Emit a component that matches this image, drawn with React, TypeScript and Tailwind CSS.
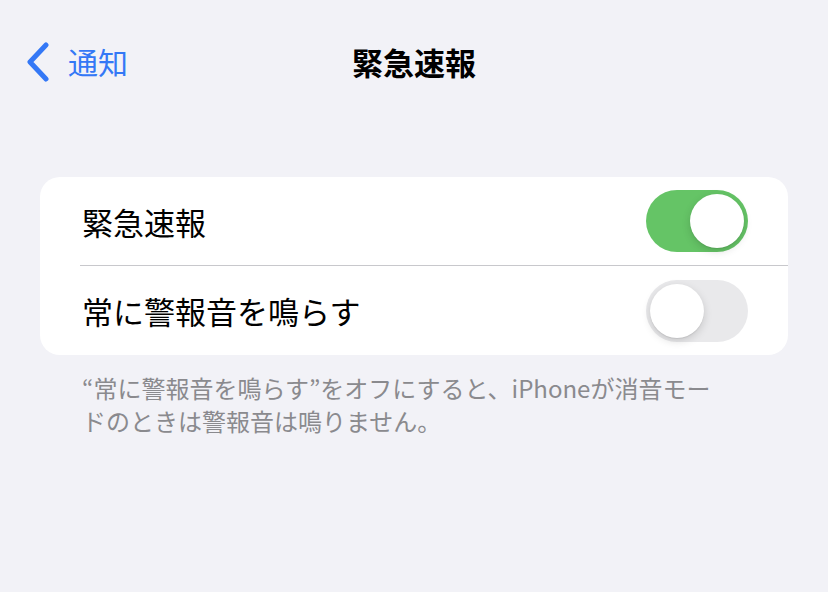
import React from "react";

const font = { fontFamily: '"Noto Sans CJK JP", "Noto Sans", sans-serif' };

function Toggle({ on }: { on: boolean }) {
  return (
    <div
      className={`relative w-[102px] h-[62px] rounded-full ${on ? "bg-[#65c466]" : "bg-[#e9e9eb]"}`}
    >
      <div
        className={`absolute top-[4px] w-[54px] h-[54px] rounded-full bg-white shadow-[0_3px_8px_rgba(0,0,0,0.15),0_1px_1px_rgba(0,0,0,0.08)] ${on ? "right-[4px]" : "left-[4px]"}`}
      />
    </div>
  );
}

export default function App() {
  return (
    <div className="w-[828px] h-[592px] bg-[#f2f2f7] overflow-hidden" style={font}>
      <div className="relative h-[124px] flex items-center justify-center">
        <div className="absolute left-[26px] top-[42px] flex items-center gap-[18px] text-[#3478f6]">
          <svg width="24" height="40" viewBox="0 0 24 40">
            <path d="M20 3 L4 20 L20 37" fill="none" stroke="#3478f6" strokeWidth="5" strokeLinecap="round" strokeLinejoin="round" />
          </svg>
          <span className="text-[30px] leading-none -mt-[2px]">通知</span>
        </div>
        <div className="text-[31px] font-bold text-black leading-none -mt-[2px]">緊急速報</div>
      </div>
      <div className="mt-[53px] mx-[40px] bg-white rounded-[20px]">
        <div className="h-[88px] flex items-center justify-between pl-[42px] pr-[40px]">
          <span className="text-[31px] text-black leading-none">緊急速報</span>
          <Toggle on />
        </div>
        <div className="ml-[40px] h-px bg-[#c8c8cc]" />
        <div className="h-[89px] flex items-center justify-between pl-[42px] pr-[40px]">
          <span className="text-[31px] text-black leading-none">常に警報音を鳴らす</span>
          <Toggle on={false} />
        </div>
      </div>
      <div className="mt-[16px] ml-[82px] text-[24px] leading-[33px] text-[#8a8a8e] whitespace-nowrap">
        <div>“常に警報音を鳴らす”をオフにすると、iPhoneが消音モー</div>
        <div>ドのときは警報音は鳴りません。</div>
      </div>
    </div>
  );
}
